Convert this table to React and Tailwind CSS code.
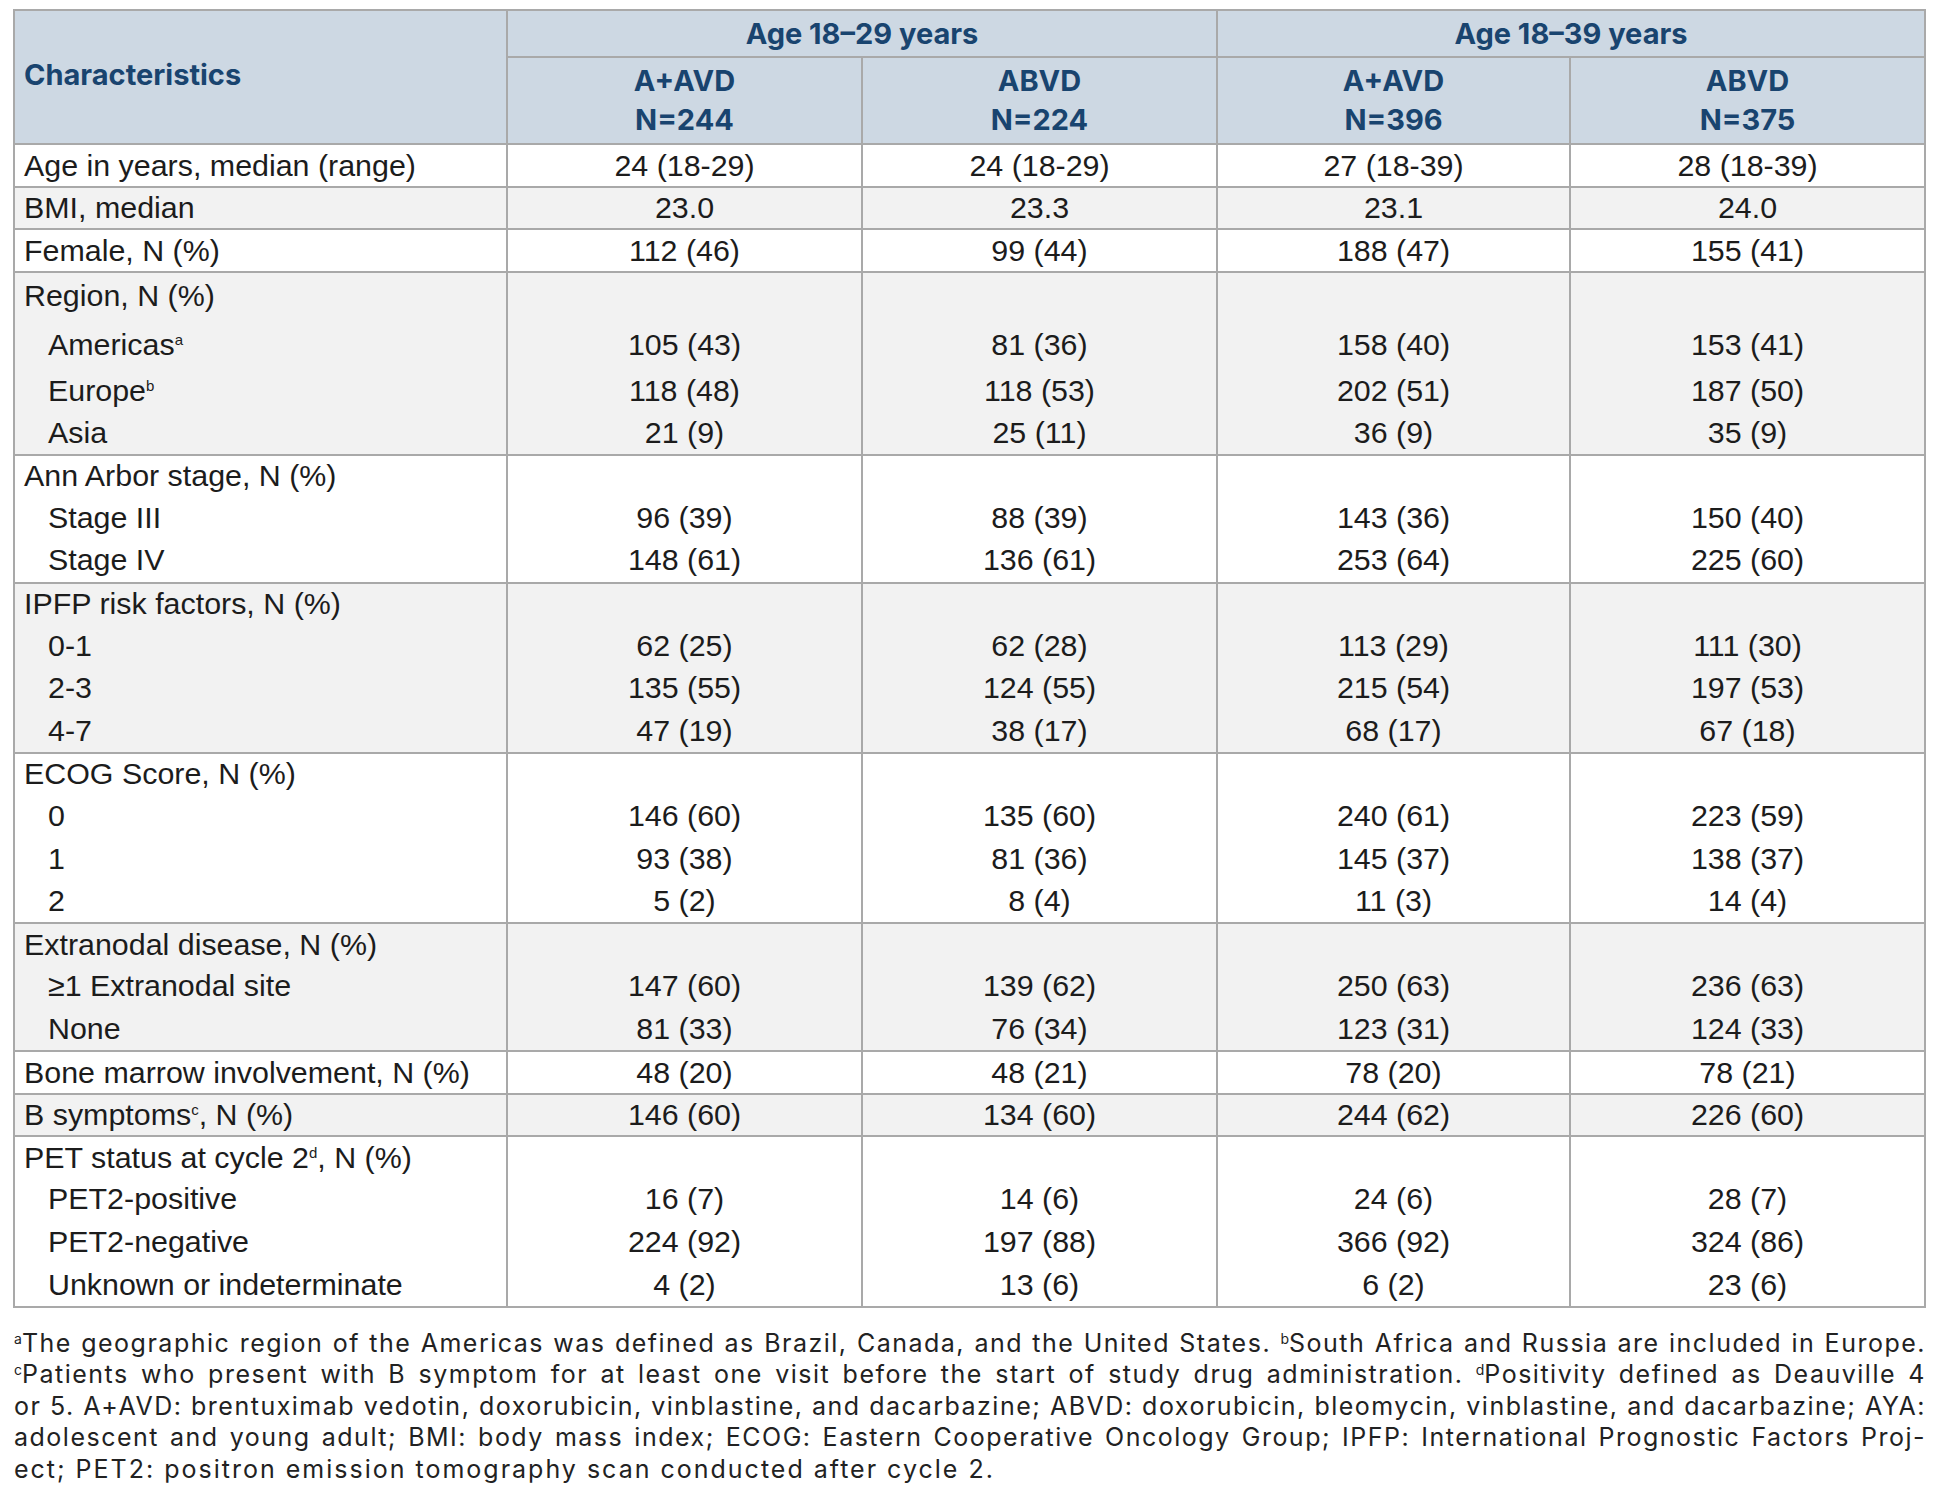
import React from "react";

const groups = [
  { gray: false, lines: [{ label: "Age in years, median (range)", v: ["24 (18-29)", "24 (18-29)", "27 (18-39)", "28 (18-39)"] }] },
  { gray: true, lines: [{ label: "BMI, median", v: ["23.0", "23.3", "23.1", "24.0"] }] },
  { gray: false, lines: [{ label: "Female, N (%)", v: ["112 (46)", "99 (44)", "188 (47)", "155 (41)"] }] },
  {
    gray: true,
    heights: [47, 50, 43, 41],
    lines: [
      { label: "Region, N (%)", v: ["", "", "", ""] },
      { label: "Americas", sup: "a", sub: true, v: ["105 (43)", "81 (36)", "158 (40)", "153 (41)"] },
      { label: "Europe", sup: "b", sub: true, v: ["118 (48)", "118 (53)", "202 (51)", "187 (50)"] },
      { label: "Asia", sub: true, v: ["21 (9)", "25 (11)", "36 (9)", "35 (9)"] },
    ],
  },
  {
    gray: false,
    lines: [
      { label: "Ann Arbor stage, N (%)", v: ["", "", "", ""] },
      { label: "Stage III", sub: true, v: ["96 (39)", "88 (39)", "143 (36)", "150 (40)"] },
      { label: "Stage IV", sub: true, v: ["148 (61)", "136 (61)", "253 (64)", "225 (60)"] },
    ],
  },
  {
    gray: true,
    lines: [
      { label: "IPFP risk factors, N (%)", v: ["", "", "", ""] },
      { label: "0-1", sub: true, v: ["62 (25)", "62 (28)", "113 (29)", "111 (30)"] },
      { label: "2-3", sub: true, v: ["135 (55)", "124 (55)", "215 (54)", "197 (53)"] },
      { label: "4-7", sub: true, v: ["47 (19)", "38 (17)", "68 (17)", "67 (18)"] },
    ],
  },
  {
    gray: false,
    lines: [
      { label: "ECOG Score, N (%)", v: ["", "", "", ""] },
      { label: "0", sub: true, v: ["146 (60)", "135 (60)", "240 (61)", "223 (59)"] },
      { label: "1", sub: true, v: ["93 (38)", "81 (36)", "145 (37)", "138 (37)"] },
      { label: "2", sub: true, v: ["5 (2)", "8 (4)", "11 (3)", "14 (4)"] },
    ],
  },
  {
    gray: true,
    lines: [
      { label: "Extranodal disease, N (%)", v: ["", "", "", ""] },
      { label: "≥1 Extranodal site", sub: true, v: ["147 (60)", "139 (62)", "250 (63)", "236 (63)"] },
      { label: "None", sub: true, v: ["81 (33)", "76 (34)", "123 (31)", "124 (33)"] },
    ],
  },
  { gray: false, lines: [{ label: "Bone marrow involvement, N (%)", v: ["48 (20)", "48 (21)", "78 (20)", "78 (21)"] }] },
  { gray: true, lines: [{ label: "B symptoms", sup: "c", after: ", N (%)", v: ["146 (60)", "134 (60)", "244 (62)", "226 (60)"] }] },
  {
    gray: false,
    lines: [
      { label: "PET status at cycle 2", sup: "d", after: ", N (%)", v: ["", "", "", ""] },
      { label: "PET2-positive", sub: true, v: ["16 (7)", "14 (6)", "24 (6)", "28 (7)"] },
      { label: "PET2-negative", sub: true, v: ["224 (92)", "197 (88)", "366 (92)", "324 (86)"] },
      { label: "Unknown or indeterminate", sub: true, v: ["4 (2)", "13 (6)", "6 (2)", "23 (6)"] },
    ],
  },
];

function lineHeight(g, i) {
  if (g.heights) return g.heights[i];
  return i === 0 ? 40.6 : 42.6;
}

function Sup({ children }) {
  return <span className="relative -top-[10px] text-[15px] leading-none">{children}</span>;
}

function FSup({ children }) {
  return <span className="relative -top-[8px] text-[14px] leading-none tracking-normal">{children}</span>;
}

export default function App() {
  const headerBg = "bg-[#cdd8e3]";
  const headText = "font-['Inter',sans-serif] font-bold text-[29px] text-[#19446f]";
  const justLine = "whitespace-nowrap text-justify [text-align-last:justify] tracking-[0.06em]";
  return (
    <div className="w-[1936px] min-h-[1504px] bg-white pt-[9px]">
      <div className="ml-[13px] grid w-fit grid-cols-[491px_353px_353px_351px_353px] gap-[2px] bg-[#a9a9a9] p-[2px] font-['Liberation_Sans',Arial,sans-serif] text-[30.4px] text-[#1c1c1c]">
        <div className={`${headerBg} ${headText} row-span-2 flex items-center pb-[4px] pl-[9px]`}>Characteristics</div>
        <div className={`${headerBg} ${headText} col-span-2 flex h-[45px] items-center justify-center`}>Age 18–29 years</div>
        <div className={`${headerBg} ${headText} col-span-2 flex h-[45px] items-center justify-center`}>Age 18–39 years</div>
        {[
          ["A+AVD", "N=244"],
          ["ABVD", "N=224"],
          ["A+AVD", "N=396"],
          ["ABVD", "N=375"],
        ].map((h, i) => (
          <div key={i} className={`${headerBg} ${headText} flex h-[85px] flex-col items-center justify-center leading-[38.5px]`}>
            <div>{h[0]}</div>
            <div>{h[1]}</div>
          </div>
        ))}
        {groups.map((g, gi) => {
          const bg = g.gray ? "bg-[#f2f2f2]" : "bg-white";
          return (
            <React.Fragment key={gi}>
              <div className={`${bg} flex flex-col`}>
                {g.lines.map((l, li) => (
                  <div
                    key={li}
                    style={{ height: lineHeight(g, li) }}
                    className={`flex items-center whitespace-nowrap ${l.sub ? "pl-[33px]" : "pl-[9px]"}`}
                  >
                    <span>
                      {l.label}
                      {l.sup && <Sup>{l.sup}</Sup>}
                      {l.after}
                    </span>
                  </div>
                ))}
              </div>
              {[0, 1, 2, 3].map((c) => (
                <div key={c} className={`${bg} flex flex-col`}>
                  {g.lines.map((l, li) => (
                    <div key={li} style={{ height: lineHeight(g, li) }} className="flex items-center justify-center whitespace-nowrap">
                      {l.v[c]}
                    </div>
                  ))}
                </div>
              ))}
            </React.Fragment>
          );
        })}
      </div>
      <div className="ml-[14px] mt-[20px] w-[1912px] font-['Inter',sans-serif] text-[25px] leading-[31.5px] text-[#222]">
        <div className={justLine}>
          <FSup>a</FSup>The geographic region of the Americas was defined as Brazil, Canada, and the United States. <FSup>b</FSup>South Africa and Russia are included in Europe.
        </div>
        <div className={justLine}>
          <FSup>c</FSup>Patients who present with B symptom for at least one visit before the start of study drug administration. <FSup>d</FSup>Positivity defined as Deauville 4
        </div>
        <div className={justLine}>
          or 5. A+AVD: brentuximab vedotin, doxorubicin, vinblastine, and dacarbazine; ABVD: doxorubicin, bleomycin, vinblastine, and dacarbazine; AYA:
        </div>
        <div className={justLine}>
          adolescent and young adult; BMI: body mass index; ECOG: Eastern Cooperative Oncology Group; IPFP: International Prognostic Factors Proj-
        </div>
        <div className="whitespace-nowrap tracking-[0.08em]">ect; PET2: positron emission tomography scan conducted after cycle 2.</div>
      </div>
    </div>
  );
}
